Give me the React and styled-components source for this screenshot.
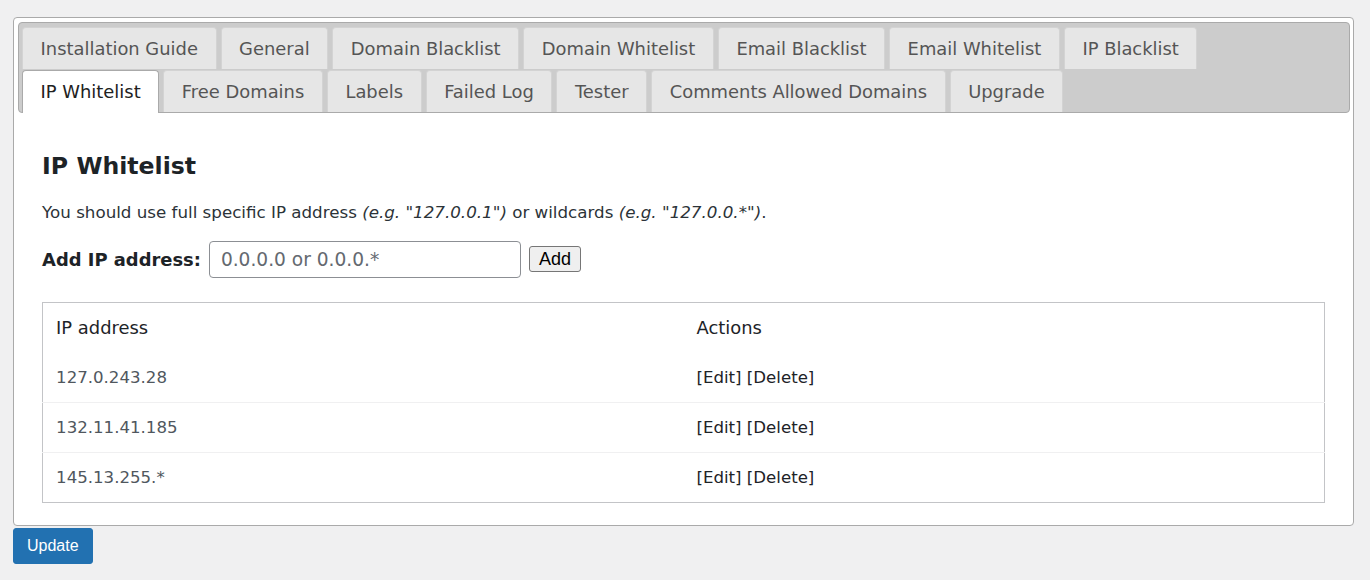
import React from 'react';
import styled, { createGlobalStyle } from 'styled-components';

const verdana = '"DejaVu Sans", Verdana, sans-serif';
const system = '"Liberation Sans", Arial, sans-serif';

const tabRows = [
  [
    'Installation Guide',
    'General',
    'Domain Blacklist',
    'Domain Whitelist',
    'Email Blacklist',
    'Email Whitelist',
    'IP Blacklist',
  ],
  ['IP Whitelist', 'Free Domains', 'Labels', 'Failed Log', 'Tester', 'Comments Allowed Domains', 'Upgrade'],
];

const ipList = ['127.0.243.28', '132.11.41.185', '145.13.255.*'];

const GlobalStyle = createGlobalStyle`
  body {
    margin: 0;
    background: #f0f0f1;
    font-family: ${system};
    color: #3c434a;
  }
`;

const Page = styled.div`
  padding: 17px 16px 0 13px;
`;

const Tabs = styled.div`
  background: #fff;
  border: 1px solid #aaa;
  border-radius: 4px;
  padding: 3.5px;
  font-family: ${verdana};
  font-size: 17.9px;
  color: #222;
`;

const Nav = styled.div`
  background: #ccc;
  border: 1px solid #aaa;
  border-radius: 4px;
  padding: 3.5px 3.5px 0;
  display: flex;
  flex-direction: column;
`;

const TabRow = styled.div`
  display: flex;
  gap: 4px;
  margin-top: 1px;
  position: relative;
  z-index: ${(p) => (p.$front ? 1 : 0)};
`;

const Tab = styled.a`
  display: block;
  padding: 9px 17.6px ${(p) => (p.$active ? '10px' : '9px')};
  margin-bottom: ${(p) => (p.$active ? '-1px' : '0')};
  line-height: 23px;
  white-space: nowrap;
  border: 1px solid ${(p) => (p.$active ? '#aaa' : '#d3d3d3')};
  border-bottom: 0;
  border-radius: 4px 4px 0 0;
  background: ${(p) => (p.$active ? '#fff' : '#e6e6e6')};
  color: ${(p) => (p.$active ? '#212121' : '#555')};
  cursor: pointer;
`;

const Panel = styled.div`
  padding: 17.6px 24.6px 18.6px;
`;

const Heading = styled.h3`
  margin: 21px 0 0;
  font-size: 23.6px;
  line-height: 28px;
  font-weight: 700;
  color: #1d2327;
`;

const Intro = styled.p`
  margin: 20px 0 0;
  font-size: 16.7px;
  line-height: 24px;
  color: #2c3338;

  em {
    font-style: italic;
  }
`;

const FormRow = styled.div`
  display: flex;
  align-items: center;
  gap: 8px;
  margin-top: 17px;
`;

const Label = styled.label`
  font-weight: 700;
  color: #1d2327;
`;

const Input = styled.input`
  box-sizing: border-box;
  width: 312px;
  height: 37px;
  padding: 0 11px;
  border: 1px solid #8c8f94;
  border-radius: 4px;
  font-family: ${verdana};
  font-size: 18.6px;
  color: #2c3338;

  &::placeholder {
    color: #646970;
  }
`;

const SmallButton = styled.button`
  height: 26px;
  padding: 0 9px;
  border: 1px solid #767676;
  border-radius: 3px;
  background: #efefef;
  font-family: ${system};
  font-size: 18px;
  color: #000;
`;

const Table = styled.table`
  width: 100%;
  margin-top: 24px;
  border: 1px solid #c3c4c7;
  border-collapse: collapse;
  table-layout: fixed;
`;

const Th = styled.th`
  height: 50px;
  padding: 0 13px;
  text-align: left;
  font-weight: 400;
  color: #1d2327;
`;

const Td = styled.td`
  height: 49px;
  padding: 0 13px;
  font-size: 16.6px;
  color: ${(p) => (p.$muted ? '#50575e' : '#1d2327')};
  border-top: ${(p) => (p.$divided ? '1px solid #f0f0f1' : '0')};
`;

const UpdateButton = styled.button`
  margin-top: 2px;
  height: 36px;
  padding: 0 13px;
  border: 1px solid #2271b1;
  border-radius: 3px;
  background: #2271b1;
  color: #fff;
  font-family: ${system};
  font-size: 16px;
`;

export default function App() {
  return (
    <>
      <GlobalStyle />
      <Page>
        <Tabs>
          <Nav>
            {tabRows.map((row, r) => (
              <TabRow key={r} $front={r === 1}>
                {row.map((name) => (
                  <Tab key={name} $active={name === 'IP Whitelist'}>
                    {name}
                  </Tab>
                ))}
              </TabRow>
            ))}
          </Nav>
          <Panel>
            <Heading>IP Whitelist</Heading>
            <Intro>
              You should use full specific IP address <em>(e.g. "127.0.0.1")</em> or wildcards{' '}
              <em>(e.g. "127.0.0.*")</em>.
            </Intro>
            <FormRow>
              <Label>Add IP address:</Label>
              <Input placeholder="0.0.0.0 or 0.0.0.*" />
              <SmallButton>Add</SmallButton>
            </FormRow>
            <Table>
              <thead>
                <tr>
                  <Th>IP address</Th>
                  <Th>Actions</Th>
                </tr>
              </thead>
              <tbody>
                {ipList.map((ip, i) => (
                  <tr key={ip}>
                    <Td $muted $divided={i > 0}>
                      {ip}
                    </Td>
                    <Td $divided={i > 0}>[Edit] [Delete]</Td>
                  </tr>
                ))}
              </tbody>
            </Table>
          </Panel>
        </Tabs>
        <UpdateButton>Update</UpdateButton>
      </Page>
    </>
  );
}
